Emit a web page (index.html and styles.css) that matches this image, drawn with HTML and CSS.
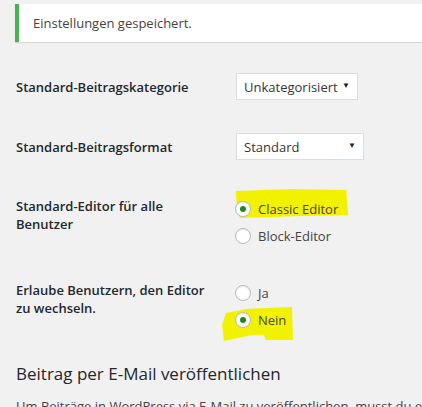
FILE: index.html
```html
<!DOCTYPE html>
<html lang="de">
<head>
<meta charset="utf-8">
<title>Einstellungen › Schreiben</title>
<link rel="stylesheet" href="styles.css">
</head>
<body>
<div class="wrap">
  <div class="notice notice-success">
    <p>Einstellungen gespeichert.</p>
  </div>

  <div class="form-table">
    <div class="row row-select">
      <div class="th">Standard-Beitragskategorie</div>
      <div class="td">
        <div class="select select-cat"><span>Unkategorisiert</span><span class="caret">▼</span></div>
      </div>
    </div>

    <div class="row row-select">
      <div class="th">Standard-Beitragsformat</div>
      <div class="td">
        <div class="select select-format"><span>Standard</span><span class="caret">▼</span></div>
      </div>
    </div>

    <div class="row row-radio row-editor">
      <div class="th">Standard-Editor für alle Benutzer</div>
      <div class="td radios">
        <svg class="marker marker-classic" viewBox="0 0 120 32" width="120" height="32" aria-hidden="true">
          <path d="M2 3 L60 1 L116 2 L118 28 L70 29 L6 31 L3 18 Z" />
        </svg>
        <label class="radio"><span class="dot checked"></span>Classic Editor</label>
        <label class="radio"><span class="dot"></span>Block-Editor</label>
      </div>
    </div>

    <div class="row row-radio">
      <div class="th th-narrow">Erlaube Benutzern, den Editor zu wechseln.</div>
      <div class="td radios">
        <svg class="marker marker-nein" viewBox="0 0 72 36" width="72" height="36" aria-hidden="true">
          <path d="M4 8 L24 4 L44 3 L70 2 L71 35 L44 35 L42 30 L30 30 L2 36 L0 20 Z" />
        </svg>
        <label class="radio"><span class="dot"></span>Ja</label>
        <label class="radio"><span class="dot checked"></span>Nein</label>
      </div>
    </div>
  </div>

  <h2 class="title">Beitrag per E-Mail veröffentlichen</h2>
  <p class="intro">Um Beiträge in WordPress via E-Mail zu veröffentlichen, musst du ein geheimes E-Mail-Konto mit POP3-Zugang einrichten.</p>
</div>
</body>
</html>
```

FILE: styles.css
```css
html, body {
  margin: 0;
  padding: 0;
  background: #f1f1f1;
}

body {
  font-family: "Open Sans", "Noto Sans", sans-serif;
  font-size: 13px;
  color: #23282d;
  overflow: hidden;
}

.wrap {
  padding: 4px 0 0 16px;
  white-space: nowrap;
}

/* success notice */
.notice {
  margin-left: -1px;
  background: #fff;
  border-left: 4px solid #46b450;
  box-shadow: 0 1px 1px rgba(0, 0, 0, 0.1);
  height: 38px;
  display: flex;
  align-items: center;
  padding-left: 14px;
}

.notice p {
  margin: 0;
  color: #444;
  font-size: 13px;
}

/* settings rows */
.form-table {
  margin-top: 16px;
}

.row {
  display: grid;
  grid-template-columns: 220px 1fr;
}

.row-select {
  padding: 15px 0 18px;
  align-items: center;
}

.row-radio {
  padding: 19px 0 18px;
  align-items: start;
}

.row-editor {
  padding-bottom: 16px;
}

.th {
  font-weight: 600;
  line-height: 18px;
  white-space: normal;
  width: 190px;
}

.th-narrow {
  width: 200px;
}

.select {
  box-sizing: border-box;
  height: 27px;
  background: #fff;
  border: 1px solid #ddd;
  display: flex;
  align-items: center;
  justify-content: space-between;
  padding: 0 7px 0 7px;
  color: #32373c;
  font-size: 13px;
}

.select-cat { width: 122px; }
.select-format { width: 128px; }

.caret {
  font-size: 8px;
  color: #222;
  margin-top: -4px;
}

/* radio groups */
.radios {
  position: relative;
  margin-top: 2px;
}

.radio {
  position: relative;
  display: flex;
  align-items: center;
  height: 20px;
  color: #444;
}

.radio + .radio {
  margin-top: 7px;
}

.dot {
  box-sizing: border-box;
  width: 16px;
  height: 16px;
  border-radius: 50%;
  border: 1px solid #b4b9be;
  background: #fff;
  margin: 0 7px 0 -1px;
  display: flex;
  align-items: center;
  justify-content: center;
  box-shadow: inset 0 1px 2px rgba(0, 0, 0, 0.07);
}

.dot.checked::after {
  content: "";
  width: 6px;
  height: 6px;
  border-radius: 50%;
  background: #1e8a1e;
}

/* highlighter marks laid over the chosen options */
.marker {
  position: absolute;
  fill: #f2f200;
}

.marker-classic {
  left: -4px;
  top: -11px;
  width: 120px;
  height: 31px;
}

.marker-nein {
  left: -14px;
  top: 22px;
  width: 72px;
  height: 36px;
}

.title {
  margin: 14px 0 0;
  font-size: 17px;
  font-weight: 400;
  line-height: 24px;
  color: #23282d;
}

.intro {
  margin: 11px 0 0;
  font-size: 13px;
  color: #444;
}
```
